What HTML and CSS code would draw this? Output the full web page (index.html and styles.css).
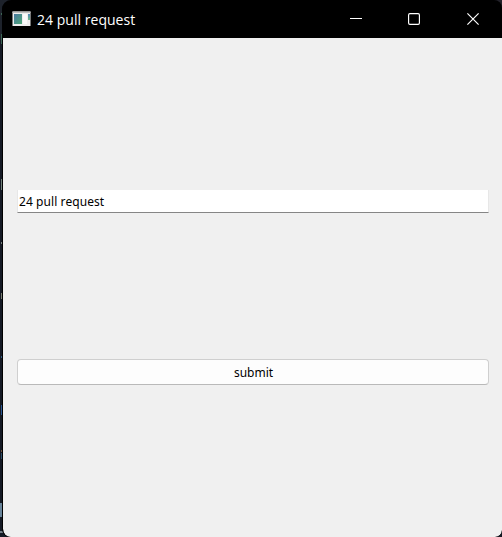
FILE: index.html
```html
<!DOCTYPE html>
<html lang="en">
<head>
<meta charset="utf-8">
<title>24 pull request</title>
<link rel="stylesheet" href="styles.css">
</head>
<body>
<div class="desktop">
  <div class="window">
    <header class="titlebar">
      <svg class="app-icon" width="19" height="16" viewBox="0 0 19 16">
        <defs>
          <linearGradient id="pane" x1="0" y1="0" x2="1" y2="1"><stop offset="0" stop-color="#4878a0"/><stop offset="1" stop-color="#50a878"/></linearGradient>
          <linearGradient id="side" x1="0" y1="0" x2="0" y2="1"><stop offset="0" stop-color="#5088b8"/><stop offset="1" stop-color="#70b888"/></linearGradient>
        </defs>
        <rect x="0.5" y="0.5" width="18" height="14.5" fill="#eee"/>
        <rect x="0.5" y="0.5" width="18" height="1.5" fill="#bbb"/>
        <rect x="2" y="3" width="8" height="10" fill="url(#pane)"/>
        <rect x="11" y="3" width="4" height="10" fill="#fafafa"/>
        <rect x="16" y="3" width="2" height="6" fill="url(#side)"/>
      </svg>
      <span class="title">24 pull request</span>
      <div class="controls">
        <svg class="minimize" width="12" height="12" viewBox="0 0 12 12"><path d="M0 5.5H12"/></svg>
        <svg width="12" height="12" viewBox="0 0 12 12"><rect x=".6" y=".6" width="10.8" height="10.8" rx="1.3"/></svg>
        <svg width="12" height="12" viewBox="0 0 12 12"><path d="M.4.4 11.6 11.6M11.6.4.4 11.6"/></svg>
      </div>
    </header>
    <main class="content">
      <input class="field" type="text" value="24 pull request" aria-label="Text">
      <button class="submit" type="button"><span>submit</span></button>
    </main>
  </div>
</div>
</body>
</html>
```

FILE: styles.css
```css
* { box-sizing: border-box; }
body { margin: 0; }
.desktop {
  width: 502px;
  height: 537px;
  padding-left: 2px;
  overflow: hidden;
  background:
    linear-gradient(#3c6655, #3c6655) 1px 34px / 1px 10px no-repeat,
    linear-gradient(#3c6655, #3c6655) 1px 13px / 1px 2px no-repeat,
    linear-gradient(#6f7f78, #6f7f78) 1px 179px / 1px 11px no-repeat,
    linear-gradient(#77807d, #77807d) 1px 242px / 1px 2px no-repeat,
    linear-gradient(#777c70, #777c70) 1px 293px / 1px 6px no-repeat,
    linear-gradient(#315e85, #315e85) 1px 356px / 1px 2px no-repeat,
    linear-gradient(#2a5794, #2a5794) 1px 405px / 1px 10px no-repeat,
    linear-gradient(#765440, #765440) 1px 450px / 1px 2px no-repeat,
    linear-gradient(#2d506b, #2d506b) 1px 453px / 1px 6px no-repeat,
    linear-gradient(#68849a, #68849a) 0 503px / 2px 14px no-repeat,
    linear-gradient(#737e88, #737e88) 0 531px / 6px 2px no-repeat,
    linear-gradient(90deg, #1d222b 0 50%, #222129 50%) 0 0 / 100% 40px no-repeat,
    #151a25;
}
.window {
  display: flex;
  flex-direction: column;
  height: 537px;
  border-left: 1px solid #000;
  border-radius: 9px 8px 7px 8px;
  background: #000;
  overflow: hidden;
}
.titlebar {
  display: flex;
  align-items: center;
  flex: 0 0 38px;
  padding: 0 23px 0 9px;
  color: #fff;
}
.title {
  margin-left: 6px;
  padding-top: 2px;
  font: 14px/20px "Open Sans", sans-serif;
  letter-spacing: .03px;
  white-space: nowrap;
}
.controls {
  display: flex;
  gap: 47px;
  margin-left: auto;
}
.controls svg { fill: none; stroke: #fff; stroke-width: 1.15; }
.controls .minimize { margin-right: -1px; }
.content {
  flex: 1;
  padding: 152px 13px 0 14px;
  border-radius: 0 0 7px 8px;
  background: #f0f0f0;
}
.field, .submit {
  display: block;
  width: 100%;
  font: 12px/16px "Noto Sans", sans-serif;
  color: #000;
}
.field {
  height: 23px;
  padding: 0 1px;
  border: solid #e7e7e7;
  border-width: 0 1px 1px;
  border-bottom-color: #868686;
  background: #fff;
  letter-spacing: .08px;
  outline: 0;
}
.submit {
  height: 26px;
  margin-top: 146px;
  padding: 1px 0 0 1px;
  border: 1px solid #cfcfcf;
  border-bottom-color: #b9b9b9;
  border-radius: 4px;
  background: #fdfdfd;
}
```
